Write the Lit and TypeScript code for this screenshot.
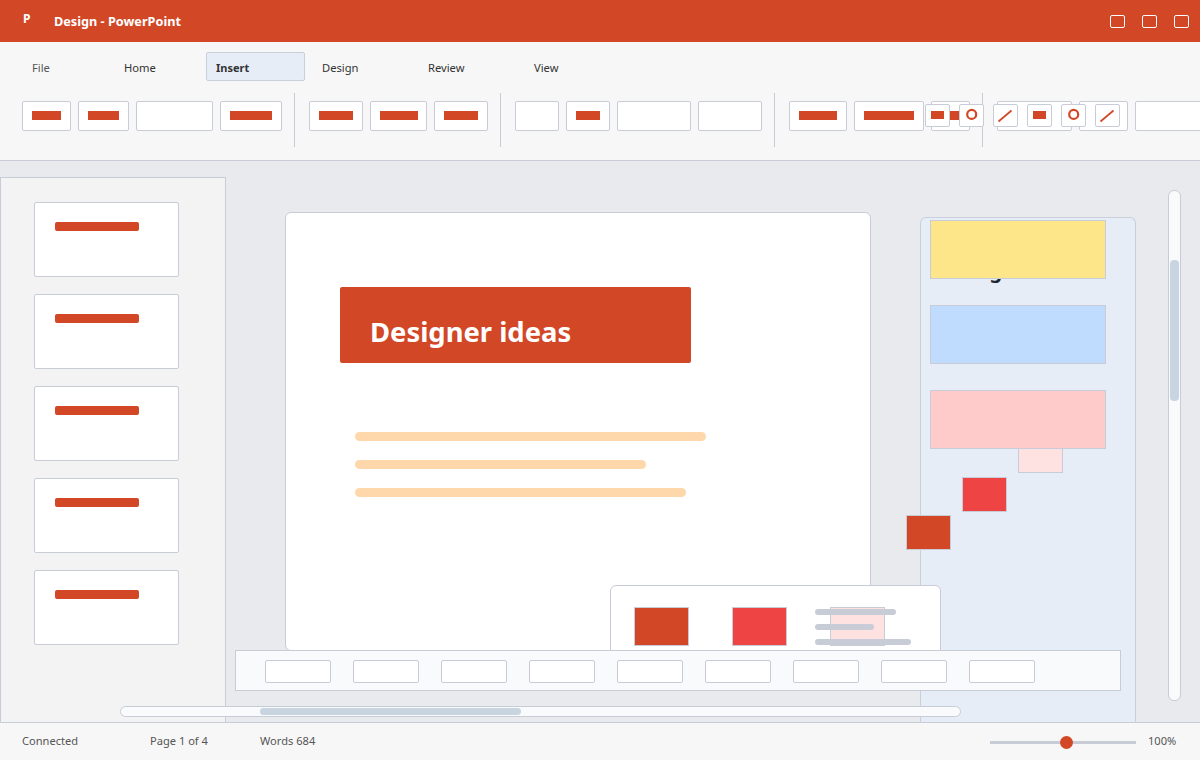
import { LitElement, html, css, svg } from 'lit';
import { customElement } from 'lit/decorators.js';

// ribbon buttons per group: [button width, bar width (0 = empty)]
const RIBBON_GROUPS: [number, number][][] = [
    [[49, 29], [51, 31], [77, 0], [62, 42]],
    [[54, 34], [57, 38], [54, 34]],
    [[44, 0], [44, 24], [74, 0], [64, 0]],
    [[58, 38], [70, 50], [39, 19]],
    [[75, 0], [49, 0], [90, 0]],
];

const TABS: [string, number][] = [
    ['File', 85],
    ['Home', 85],
    ['Insert', 99],
    ['Design', 99],
    ['Review', 99],
    ['View', 85],
];

const MINI_ICONS = ['rect', 'circle', 'line', 'rect', 'circle', 'line'];

@customElement('app-root')
export class AppRoot extends LitElement {
    static styles = css`
        :host {
            display: block;
            width: 1200px;
            height: 760px;
            overflow: hidden;
            font-family: 'Noto Sans', 'Open Sans', sans-serif;
            color: #333;
        }

        .app {
            position: relative;
            display: flex;
            flex-direction: column;
            height: 760px;
            overflow: hidden;
            background: #e9eaee;
        }

        /* Title bar */
        .titlebar {
            flex: none;
            display: flex;
            align-items: center;
            height: 42px;
            padding: 0 11px 0 23px;
            box-sizing: border-box;
            background: #d24726;
            color: #fff;
        }

        .logo {
            width: 31px;
            font-size: 12px;
            font-weight: 700;
            line-height: 12px;
            margin-top: -5px;
        }

        .doc-title {
            flex: 1;
            font-size: 12.7px;
            font-weight: 700;
            line-height: 16px;
        }

        .win-btns {
            display: flex;
            gap: 17px;
        }

        .win-btn {
            width: 15px;
            height: 13px;
            box-sizing: border-box;
            border: 1px solid #fff;
            border-radius: 2px;
        }

        /* Ribbon */
        .ribbon {
            flex: none;
            position: relative;
            height: 119px;
            box-sizing: border-box;
            padding: 10px 0 0 22px;
            background: #f7f7f7;
            border-bottom: 1px solid #c8ccd6;
            overflow: hidden;
        }

        .tabs {
            display: flex;
            gap: 7px;
            height: 29px;
        }

        .tab {
            flex: none;
            box-sizing: border-box;
            height: 29px;
            padding: 0 9px;
            border: 1px solid transparent;
            border-radius: 2px;
            font-size: 11.2px;
            line-height: 29px;
            color: #333;
        }

        .tab.first {
            color: #555;
        }

        .tab.active {
            background: #e6edf7;
            border-color: #c8d0dc;
            font-size: 11px;
            font-weight: 700;
        }

        .tools {
            display: flex;
            align-items: flex-start;
            margin-top: 12px;
        }

        .group {
            flex: none;
            display: flex;
            gap: 7px;
            padding-top: 8px;
            height: 54px;
            box-sizing: border-box;
        }

        .divider {
            flex: none;
            width: 1px;
            height: 54px;
            margin: 0 14px 0 12px;
            background: #c8ccd6;
        }

        .tool {
            flex: none;
            box-sizing: border-box;
            height: 30px;
            display: flex;
            align-items: center;
            justify-content: center;
            background: #fff;
            border: 1px solid #c8ccd6;
            border-radius: 2px;
            padding-bottom: 2px;
        }

        .tool-bar {
            height: 9px;
            background: #d24726;
        }

        .minis {
            position: absolute;
            left: 925px;
            top: 62px;
            display: flex;
            gap: 9px;
        }

        .mini {
            width: 25px;
            height: 23px;
            box-sizing: border-box;
            background: #fff;
            border: 1px solid #c8ccd6;
            border-radius: 2px;
        }

        .mini svg {
            display: block;
        }

        /* Work area */
        .work {
            flex: 1;
            min-height: 0;
            position: relative;
            display: flex;
        }

        .sidebar {
            flex: none;
            width: 226px;
            margin-top: 16px;
            box-sizing: border-box;
            padding: 24px 0 0 33px;
            display: flex;
            flex-direction: column;
            gap: 17px;
            background: #f3f3f4;
            border: 1px solid #c8ccd6;
            border-bottom: none;
        }

        .thumb {
            flex: none;
            width: 145px;
            height: 75px;
            box-sizing: border-box;
            padding: 19px 0 0 20px;
            background: #fff;
            border: 1px solid #c8ccd6;
            border-radius: 2px;
        }

        .thumb-bar {
            width: 84px;
            height: 9px;
            border-radius: 2px;
            background: #d24726;
        }

        .slide {
            flex: none;
            width: 586px;
            height: 439px;
            margin: 51px 0 0 59px;
            box-sizing: border-box;
            padding: 74px 0 0 54px;
            background: #fff;
            border: 1px solid #c8ccd6;
            border-radius: 6px;
        }

        .slide-title {
            width: 351px;
            height: 76px;
            box-sizing: border-box;
            padding: 0 30px;
            background: #d24726;
            border-radius: 2px;
            color: #fff;
            font-size: 27.4px;
            font-weight: 700;
            line-height: 90px;
            overflow: hidden;
            white-space: nowrap;
        }

        .lines {
            display: flex;
            flex-direction: column;
            gap: 19px;
            margin: 69px 0 0 15px;
        }

        .line {
            height: 9px;
            border-radius: 5px;
            background: #fed7aa;
        }

        .panel {
            flex: none;
            position: relative;
            width: 216px;
            margin: 56px 0 0 49px;
            box-sizing: border-box;
            padding: 2px 0 0 9px;
            display: flex;
            flex-direction: column;
            align-items: flex-start;
            background: #e6edf7;
            border: 1px solid #c8d0dc;
            border-bottom: none;
            border-radius: 6px 6px 0 0;
        }

        /* sits mostly behind the first swatch, only the g tail shows */
        .panel-heading {
            position: absolute;
            left: 26px;
            top: 39px;
            font-size: 20px;
            font-weight: 700;
            line-height: 28px;
            color: #1f2430;
            white-space: nowrap;
        }

        .swatch {
            position: relative;
            flex: none;
            box-sizing: border-box;
            border: 1px solid #c8ccd6;
        }

        .swatch.big {
            width: 176px;
            height: 59px;
            margin-bottom: 26px;
        }

        .swatch.yellow { background: #fde68a; }
        .swatch.blue { background: #bfdbfe; }
        .swatch.pink { background: #fecaca; margin-bottom: 0; }

        .swatch.pale {
            width: 45px;
            height: 25px;
            margin: -1px 0 4px 88px;
            background: #fee2e2;
        }

        .swatch.red {
            width: 45px;
            height: 35px;
            margin: 0 0 3px 32px;
            background: #ef4444;
        }

        .swatch.orange {
            width: 45px;
            height: 35px;
            margin-left: -24px;
            background: #d24726;
        }

        /* Floating over the slide */
        .popup {
            position: absolute;
            left: 610px;
            top: 424px;
            width: 331px;
            height: 90px;
            box-sizing: border-box;
            padding: 21px 0 0 23px;
            display: flex;
            gap: 43px;
            background: #fff;
            border: 1px solid #c8ccd6;
            border-radius: 6px 6px 0 0;
        }

        .chip {
            flex: none;
            width: 55px;
            height: 39px;
            box-sizing: border-box;
            border: 1px solid #c8ccd6;
        }

        .chip.orange { background: #d24726; }
        .chip.red { background: #ef4444; }
        .chip.pale { background: #fee2e2; }

        .popup-lines {
            position: absolute;
            left: 204px;
            top: 23px;
            display: flex;
            flex-direction: column;
            gap: 9px;
        }

        .popup-line {
            height: 6px;
            border-radius: 3px;
            background: #c8ccd6;
        }

        .toolbar {
            position: absolute;
            left: 235px;
            top: 489px;
            width: 886px;
            height: 41px;
            box-sizing: border-box;
            padding: 9px 0 0 29px;
            display: flex;
            gap: 22px;
            background: #f9fafc;
            border: 1px solid #c8ccd6;
        }

        .toolbar-btn {
            flex: none;
            width: 66px;
            height: 23px;
            box-sizing: border-box;
            background: #fff;
            border: 1px solid #c8ccd6;
            border-radius: 2px;
        }

        .hscroll {
            position: absolute;
            left: 120px;
            top: 545px;
            width: 841px;
            height: 11px;
            box-sizing: border-box;
            padding: 1px 0 0 139px;
            background: #f9fafc;
            border: 1px solid #c8ccd6;
            border-radius: 6px;
        }

        .hscroll-thumb {
            width: 261px;
            height: 7px;
            border-radius: 4px;
            background: #c9d4e1;
        }

        .vscroll {
            position: absolute;
            left: 1168px;
            top: 29px;
            width: 13px;
            height: 511px;
            box-sizing: border-box;
            padding: 69px 0 0 1px;
            background: #f9fafc;
            border: 1px solid #c8ccd6;
            border-radius: 6px;
        }

        .vscroll-thumb {
            width: 9px;
            height: 141px;
            border-radius: 4px;
            background: #c9d4e1;
        }

        /* Status bar */
        .statusbar {
            flex: none;
            position: relative;
            z-index: 1;
            display: flex;
            align-items: center;
            height: 38px;
            box-sizing: border-box;
            padding: 0 0 2px 22px;
            background: #f7f7f7;
            border-top: 1px solid #c8ccd6;
            font-size: 11.1px;
            color: #555;
        }

        .status-item {
            flex: none;
        }

        .status-item.connected { width: 128px; }
        .status-item.page { width: 110px; }
        .status-item.words { flex: 1; }

        .slider {
            position: relative;
            flex: none;
            width: 146px;
            height: 3px;
            margin: 4px 12px 0 0;
            background: #c8ccd6;
        }

        .slider-thumb {
            position: absolute;
            left: 70px;
            top: -5px;
            width: 13px;
            height: 13px;
            border-radius: 50%;
            background: #d24726;
        }

        .zoom {
            width: 52px;
        }
    `;

    renderMini(kind: string) {
        let shape;
        if (kind === 'rect') {
            shape = svg`<rect x="5" y="6" width="13" height="8" fill="#d24726"></rect>`;
        } else if (kind === 'circle') {
            shape = svg`<circle cx="11.7" cy="9.4" r="4.5" fill="none" stroke="#d24726" stroke-width="2.2"></circle>`;
        } else {
            shape = svg`<line x1="4.5" y1="16.5" x2="17.5" y2="5.5" stroke="#d24726" stroke-width="1.7"></line>`;
        }
        return html`<div class="mini">
            <svg width="23" height="21" viewBox="0 0 23 21">${shape}</svg>
        </div>`;
    }

    renderRibbon() {
        return html`
            <div class="ribbon">
                <div class="tabs">
                    ${TABS.map(([name, width], i) => html`
                        <div
                            class="tab ${name === 'Insert' ? 'active' : ''} ${i === 0 ? 'first' : ''}"
                            style="width:${width}px"
                        >${name}</div>
                    `)}
                </div>
                <div class="tools">
                    ${RIBBON_GROUPS.map((group, i) => html`
                        ${i > 0 ? html`<div class="divider"></div>` : ''}
                        <div class="group">
                            ${group.map(([width, bar]) => html`
                                <div class="tool" style="width:${width}px">
                                    ${bar ? html`<div class="tool-bar" style="width:${bar}px"></div>` : ''}
                                </div>
                            `)}
                        </div>
                    `)}
                </div>
                <div class="minis">${MINI_ICONS.map(kind => this.renderMini(kind))}</div>
            </div>
        `;
    }

    render() {
        return html`
            <div class="app">
                <div class="titlebar">
                    <div class="logo">P</div>
                    <div class="doc-title">Design - PowerPoint</div>
                    <div class="win-btns">
                        <div class="win-btn"></div>
                        <div class="win-btn"></div>
                        <div class="win-btn"></div>
                    </div>
                </div>

                ${this.renderRibbon()}

                <div class="work">
                    <div class="sidebar">
                        ${[1, 2, 3, 4, 5].map(() => html`
                            <div class="thumb"><div class="thumb-bar"></div></div>
                        `)}
                    </div>

                    <div class="slide">
                        <div class="slide-title">Designer ideas</div>
                        <div class="lines">
                            <div class="line" style="width:351px"></div>
                            <div class="line" style="width:291px"></div>
                            <div class="line" style="width:331px"></div>
                        </div>
                    </div>

                    <div class="panel">
                        <div class="panel-heading">Designer</div>
                        <div class="swatch big yellow"></div>
                        <div class="swatch big blue"></div>
                        <div class="swatch big pink"></div>
                        <div class="swatch pale"></div>
                        <div class="swatch red"></div>
                        <div class="swatch orange"></div>
                    </div>

                    <div class="popup">
                        <div class="chip orange"></div>
                        <div class="chip red"></div>
                        <div class="chip pale"></div>
                        <div class="popup-lines">
                            <div class="popup-line" style="width:81px"></div>
                            <div class="popup-line" style="width:59px"></div>
                            <div class="popup-line" style="width:96px"></div>
                        </div>
                    </div>

                    <div class="toolbar">
                        ${[1, 2, 3, 4, 5, 6, 7, 8, 9].map(() => html`<div class="toolbar-btn"></div>`)}
                    </div>

                    <div class="hscroll"><div class="hscroll-thumb"></div></div>
                    <div class="vscroll"><div class="vscroll-thumb"></div></div>
                </div>

                <div class="statusbar">
                    <div class="status-item connected">Connected</div>
                    <div class="status-item page">Page 1 of 4</div>
                    <div class="status-item words">Words 684</div>
                    <div class="slider"><div class="slider-thumb"></div></div>
                    <div class="zoom">100%</div>
                </div>
            </div>
        `;
    }
}
